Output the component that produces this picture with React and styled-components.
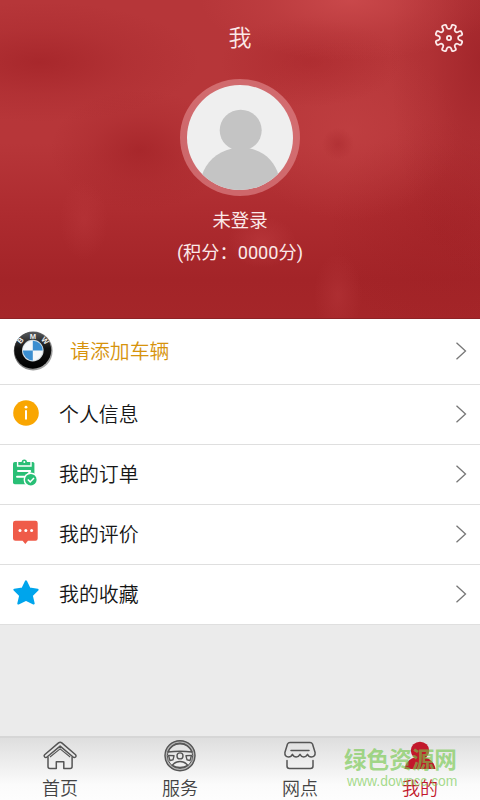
import React from 'react';
import styled, { createGlobalStyle } from 'styled-components';

const GlobalStyle = createGlobalStyle`
  * {
    box-sizing: border-box;
  }

  body {
    margin: 0;
    font-family: Roboto, "Noto Sans CJK SC", sans-serif;
  }
`;

const Screen = styled.div`
  position: relative;
  display: flex;
  flex-direction: column;
  width: 480px;
  height: 800px;
  overflow: hidden;
  background: #ebebeb;
`;

const Header = styled.header`
  display: flex;
  flex-direction: column;
  align-items: center;
  height: 319px;
  flex-shrink: 0;
  color: #fbe9e9;
  border-bottom: 1px solid #8f2226;
  background:
    radial-gradient(ellipse 150px 60px at 350px 0, rgba(214, 84, 86, 0.6), rgba(214, 84, 86, 0.2) 55%, rgba(214, 84, 86, 0)),
    radial-gradient(ellipse 90px 220px at 480px 60px, rgba(150, 28, 34, 0.6), rgba(150, 28, 34, 0.2) 55%, rgba(150, 28, 34, 0)),
    radial-gradient(ellipse 160px 60px at 40px 62px, rgba(158, 30, 35, 0.6), rgba(158, 30, 35, 0.2) 55%, rgba(158, 30, 35, 0)),
    radial-gradient(ellipse 90px 60px at 140px 150px, rgba(158, 30, 35, 0.6), rgba(158, 30, 35, 0.2) 55%, rgba(158, 30, 35, 0)),
    radial-gradient(ellipse 16px 16px at 338px 144px, rgba(158, 30, 35, 0.35), rgba(158, 30, 35, 0)),
    radial-gradient(ellipse 90px 45px at 310px 62px, rgba(165, 34, 39, 0.45), rgba(165, 34, 39, 0)),
    radial-gradient(ellipse 110px 90px at 350px 130px, rgba(196, 68, 70, 0.55), rgba(196, 68, 70, 0)),
    radial-gradient(ellipse 24px 40px at 84px 220px, rgba(192, 62, 66, 0.32), rgba(192, 62, 66, 0)),
    radial-gradient(ellipse 34px 26px at 262px 242px, rgba(196, 66, 70, 0.45), rgba(196, 66, 70, 0)),
    radial-gradient(ellipse 24px 42px at 338px 295px, rgba(188, 60, 64, 0.4), rgba(188, 60, 64, 0)),
    radial-gradient(ellipse 110px 110px at 440px 230px, rgba(156, 30, 34, 0.4), rgba(156, 30, 34, 0)),
    linear-gradient(180deg, #b63639 0%, #b73639 45%, #ad2b2f 68%, #a32428 88%, #a52629 100%);
`;

const TitleBar = styled.div`
  display: grid;
  grid-template-columns: 60px 1fr 60px;
  align-items: center;
  width: 100%;
  height: 76px;
`;

const Title = styled.h1`
  grid-column: 2;
  margin: 2px 0 0;
  font-size: 23px;
  font-weight: 350;
  line-height: 30px;
  text-align: center;
`;

const SettingsButton = styled.button`
  display: flex;
  width: 30px;
  height: 30px;
  margin: 0 0 0 14px;
  padding: 0;
  border: 0;
  background: none;
`;

const Avatar = styled.div`
  width: 120px;
  height: 117px;
  margin-top: 3px;
  padding: 6px 7px;
  border-radius: 50%;
  background: rgba(235, 160, 163, 0.5);

  svg {
    display: block;
    border-radius: 50%;
  }
`;

const UserName = styled.div`
  margin-top: 12px;
  font-size: 18.4px;
  line-height: 26px;
`;

const Points = styled.div`
  margin-top: 6px;
  font-size: 18.2px;
  line-height: 26px;
`;

const Menu = styled.nav`
  display: flex;
  flex-direction: column;
`;

const MenuItem = styled.div`
  display: flex;
  align-items: center;
  height: ${props => (props.$tall ? 66 : 60)}px;
  padding: 0 13px 2px;
  gap: ${props => (props.$tall ? 16 : 20)}px;
  background: #fff;
  border-bottom: 1px solid #dfdfdf;
`;

const MenuIcon = styled.span`
  display: flex;
  align-items: center;
  flex-shrink: 0;
  width: ${props => (props.$wide ? 41 : 26)}px;
  padding-bottom: ${props => (props.$wide ? 0 : 2)}px;
`;

const MenuLabel = styled.span`
  flex: 1;
  padding-top: 4px;
  color: ${props => props.$color || '#161616'};
  font-size: 19.9px;
  font-weight: 350;
  line-height: 28px;
`;

const TabBar = styled.footer`
  display: grid;
  grid-template-columns: repeat(4, 1fr);
  height: 64px;
  margin-top: auto;
  border-top: 2px solid #d6d6d6;
  background: linear-gradient(180deg, #dedede, #fbfbfb 75%, #fdfdfd);
`;

const Tab = styled.div`
  display: flex;
  flex-direction: column;
  align-items: center;
  padding-top: 2px;
  color: ${props => (props.$active ? '#c2182b' : '#444')};
  font-size: 18px;
  font-weight: 350;
  line-height: 26px;

  svg {
    display: block;
    margin-bottom: 4px;
  }
`;

const Watermark = styled.div`
  position: absolute;
  left: 344px;
  top: 748px;
  width: 116px;
  color: rgba(116, 200, 76, 0.65);
  white-space: nowrap;
`;

const WatermarkName = styled.div`
  font-size: 22.6px;
  font-weight: 700;
  line-height: 26px;
`;

const WatermarkSite = styled.div`
  padding-left: 3px;
  font-family: "Liberation Sans", sans-serif;
  font-size: 13.9px;
  line-height: 15px;
`;

// eight teeth, every corner rounded by the same distance
const gearPath = () => {
  const points = [];
  for (let i = 0; i < 8; i++) {
    const mid = 22.5 + i * 45;
    [[-12, 9.2], [-9.5, 14], [9.5, 14], [12, 9.2]].forEach(([offset, r]) => {
      const a = ((mid + offset) * Math.PI) / 180;
      points.push([15 + r * Math.cos(a), 15 + r * Math.sin(a)]);
    });
  }
  const toward = (a, b, dist) => {
    const len = Math.hypot(b[0] - a[0], b[1] - a[1]);
    const x = a[0] + ((b[0] - a[0]) * dist) / len;
    const y = a[1] + ((b[1] - a[1]) * dist) / len;
    return `${x.toFixed(2)} ${y.toFixed(2)}`;
  };
  const n = points.length;
  return points
    .map((p, i) => {
      const start = toward(p, points[(i + n - 1) % n], 1.6);
      const end = toward(p, points[(i + 1) % n], 1.6);
      return `${i ? 'L' : 'M'}${start}Q${p[0].toFixed(2)} ${p[1].toFixed(2)} ${end}`;
    })
    .join('') + 'Z';
};

const GearIcon = () => (
  <svg width="30" height="30" viewBox="0 0 30 30" fill="none" stroke="#fbe9e9" strokeWidth="1.8">
    <path d={gearPath()} strokeLinejoin="round" />
    <circle cx="15" cy="15" r="2.1" />
  </svg>
);

const PersonPicture = () => (
  <svg width="106" height="105" viewBox="0 0 106 105">
    <rect width="106" height="105" fill="#efefef" />
    <ellipse cx="53.7" cy="45.3" rx="21" ry="20.5" fill="#c4c4c4" />
    <path d="M45 63.5h18C79 67 88 78 91.5 90v16H15V90C19 78 29 67 45 63.5Z" fill="#c4c4c4" />
  </svg>
);

const BmwLogo = () => (
  <svg width="41" height="40" viewBox="0 0 41 40">
    <defs>
      <linearGradient id="rim" x1="0" y1="0" x2="1" y2="1">
        <stop offset="0" stopColor="#555" />
        <stop offset="0.5" stopColor="#777" />
        <stop offset="1" stopColor="#bbb" />
      </linearGradient>
      <linearGradient id="ring" x1="0" y1="0" x2="0" y2="1">
        <stop offset="0" stopColor="#55585a" />
        <stop offset="0.45" stopColor="#111" />
        <stop offset="1" stopColor="#000" />
      </linearGradient>
    </defs>
    <circle cx="20.2" cy="20" r="19.4" fill="url(#rim)" />
    <circle cx="19.8" cy="19.3" r="18.4" fill="url(#ring)" />
    <circle cx="19.8" cy="19.6" r="10.8" fill="#d5dce0" />
    <circle cx="19.8" cy="19.6" r="9.9" fill="#f5f8fa" />
    <path d="M19.8 19.6V9.7a9.9 9.9 0 0 1 9.9 9.9ZM19.8 19.6v9.9a9.9 9.9 0 0 1-9.9-9.9Z" fill="#3b8ed0" />
    <g fill="#eee" fontFamily="Liberation Sans, sans-serif" fontSize="7.6" fontWeight="700" textAnchor="middle">
      <text transform="translate(9.4 11.3) rotate(-48)">B</text>
      <text x="19.8" y="7.6">M</text>
      <text transform="translate(30.2 11.3) rotate(48)">W</text>
    </g>
  </svg>
);

const InfoIcon = () => (
  <svg width="26" height="26" viewBox="0 0 26 26">
    <circle cx="13" cy="13" r="12.8" fill="#f9a602" />
    <circle cx="13" cy="7.2" r="1.4" fill="#fff" />
    <path d="M13 10.2v9.3" stroke="#fff" strokeWidth="2" />
  </svg>
);

const OrderIcon = () => (
  <svg width="26" height="28" viewBox="0 0 26 28">
    <path d="M1.8 3h18q1.6 0 1.6 1.6V25.3H1.8Q0 25.3 0 23.5V4.6Q0 3 1.8 3Z" fill="#29bf76" />
    <path d="M4.6 2.5V7H18V2.5" fill="none" stroke="#fff" strokeWidth="1.4" />
    <path d="M6.2 5.8V3.3h2.4a2.7 2.9 0 0 1 5.4 0h2.5v2.5Z" fill="#29bf76" />
    <circle cx="11.3" cy="3" r="1" fill="#fff" />
    <path d="M5 12h12.2L14 17.7H4" fill="none" stroke="#fff" strokeWidth="1.9" strokeLinecap="round" strokeLinejoin="round" />
    <circle cx="17.8" cy="20.7" r="7.2" fill="#fff" />
    <circle cx="17.8" cy="20.7" r="5.8" fill="#29bf76" />
    <path d="m14.8 20.5 2.4 2.4 3.8-4" fill="none" stroke="#fff" strokeWidth="1.5" />
  </svg>
);

const CommentIcon = () => (
  <svg width="26" height="26" viewBox="0 0 26 26">
    <path d="M2.5.7h20q2.200 0 2.200 2.200v15.600q0 2.200-2.200 2.200H15L12.300 24 9.600 20.700H2.500Q0 20.700 0 18.500V2.900Q0 .7 2.500.7Z" fill="#ef5b49" />
    <g fill="#fff">
      <circle cx="7" cy="10.6" r="1.5" />
      <circle cx="12.8" cy="10.6" r="1.5" />
      <circle cx="18.6" cy="10.6" r="1.5" />
    </g>
  </svg>
);

const StarIcon = () => (
  <svg width="26" height="26" viewBox="0 0 26 26">
    <path
      d="m13 1.3 3.6 7.3 8 1.2-5.8 5.8 1.9 7.9L13 19.8l-7.7 3.7 1.9-7.9L1.4 9.8l8-1.2Z"
      fill="#00a5ec"
      stroke="#00a5ec"
      strokeWidth="2"
      strokeLinejoin="round"
    />
  </svg>
);

const ArrowIcon = () => (
  <svg width="12" height="20" viewBox="0 0 12 20" fill="none" stroke="#777" strokeWidth="1.3">
    <path d="m1.5 1.7 9 8.3-9 8.3" />
  </svg>
);

const HomeIcon = () => (
  <svg width="36" height="32" viewBox="0 0 36 32" fill="none" stroke="#555" strokeWidth="1.5" strokeLinejoin="round">
    <path d="M16.5 2.9q1.700-1.400 3.300 0L33.600 14.800q1 1.200 0 2.200-1.300 1-2.500 0L18.100 6.100 5 17q-1.200 1-2.400 0-1-1.100 0-2.200Z" />
    <path d="M6 16.800v9.700q0 2 2 2h6.300v-6.700h7.500v6.700h6.300q2 0 2-2v-9.700" />
    <path d="M8 17 18.100 8.900 28.200 17" strokeWidth="1.100" />
  </svg>
);

const WheelIcon = () => (
  <svg width="32" height="32" viewBox="0 0 32 32" fill="none" stroke="#555" strokeWidth="1.4" strokeLinejoin="round">
    <circle cx="16" cy="15.7" r="14" stroke="#b5b5b5" strokeWidth="2.6" />
    <circle cx="16" cy="15.7" r="15" />
    <circle cx="16" cy="15.7" r="12.7" strokeWidth="1" />
    <path d="M4 12C6.5 6 10.5 3.7 16 3.7S25.5 6 28 12Q16 10.6 4 12Z" />
    <circle cx="16" cy="15.9" r="3" />
    <path d="m4.5 15.4 5.5.4-1 4-3 .8ZM27.5 15.4l-5.5.4 1 4 3 .8Z" />
    <path d="M8.3 25.3q3-3.8 7.7-3.8t7.7 3.8q-3.2 2.2-7.7 2.2t-7.7-2.2Z" />
  </svg>
);

const StoreIcon = () => (
  <svg width="34" height="32" viewBox="0 0 34 32" fill="none" stroke="#555" strokeWidth="1.5" strokeLinejoin="round" strokeLinecap="round">
    <path d="M7 2.5h20q1.7 0 2.5 1.5l2.6 8.5q.4 4.2-3.8 4.5-2.6 0-3.8-2.6-1.4 2.6-3.8 2.6T17 14.4Q15.7 17 13.2 17t-3.8-2.6Q8.2 17 5.6 17 1.5 16.7 1.9 12.5L4.5 4Q5.3 2.5 7 2.5Z" />
    <path d="M8 10.5h18" />
    <path d="M4 20.5V26q0 2.5 2.5 2.5h21Q30 28.5 30 26v-5.5" />
  </svg>
);

const MineIcon = () => (
  <svg width="34" height="32" viewBox="0 0 34 32" fill="#c2182b">
    <ellipse cx="17" cy="10.6" rx="9.2" ry="8.9" />
    <path d="M11.5 17.5h11c6 1.8 9 6 10 11.5h-31c1-5.5 4-9.700 10-11.500Z" />
  </svg>
);

const menuItems = [
  { label: '个人信息', icon: <InfoIcon /> },
  { label: '我的订单', icon: <OrderIcon /> },
  { label: '我的评价', icon: <CommentIcon /> },
  { label: '我的收藏', icon: <StarIcon /> }
];

const tabs = [
  { label: '首页', icon: <HomeIcon /> },
  { label: '服务', icon: <WheelIcon /> },
  { label: '网点', icon: <StoreIcon /> },
  { label: '我的', icon: <MineIcon />, active: true }
];

const App = () => {
  return (
    <>
      <GlobalStyle />
      <Screen>
        <Header>
          <TitleBar>
            <Title>我</Title>
            <SettingsButton>
              <GearIcon />
            </SettingsButton>
          </TitleBar>
          <Avatar>
            <PersonPicture />
          </Avatar>
          <UserName>未登录</UserName>
          <Points>(积分：0000分)</Points>
        </Header>

        <Menu>
          <MenuItem $tall>
            <MenuIcon $wide>
              <BmwLogo />
            </MenuIcon>
            <MenuLabel $color="#d6930c">请添加车辆</MenuLabel>
            <ArrowIcon />
          </MenuItem>
          {menuItems.map(item => (
            <MenuItem key={item.label}>
              <MenuIcon>{item.icon}</MenuIcon>
              <MenuLabel>{item.label}</MenuLabel>
              <ArrowIcon />
            </MenuItem>
          ))}
        </Menu>

        <TabBar>
          {tabs.map(tab => (
            <Tab key={tab.label} $active={tab.active}>
              {tab.icon}
              {tab.label}
            </Tab>
          ))}
        </TabBar>

        <Watermark>
          <WatermarkName>绿色资源网</WatermarkName>
          <WatermarkSite>www.downcc.com</WatermarkSite>
        </Watermark>
      </Screen>
    </>
  );
};

export default App;
